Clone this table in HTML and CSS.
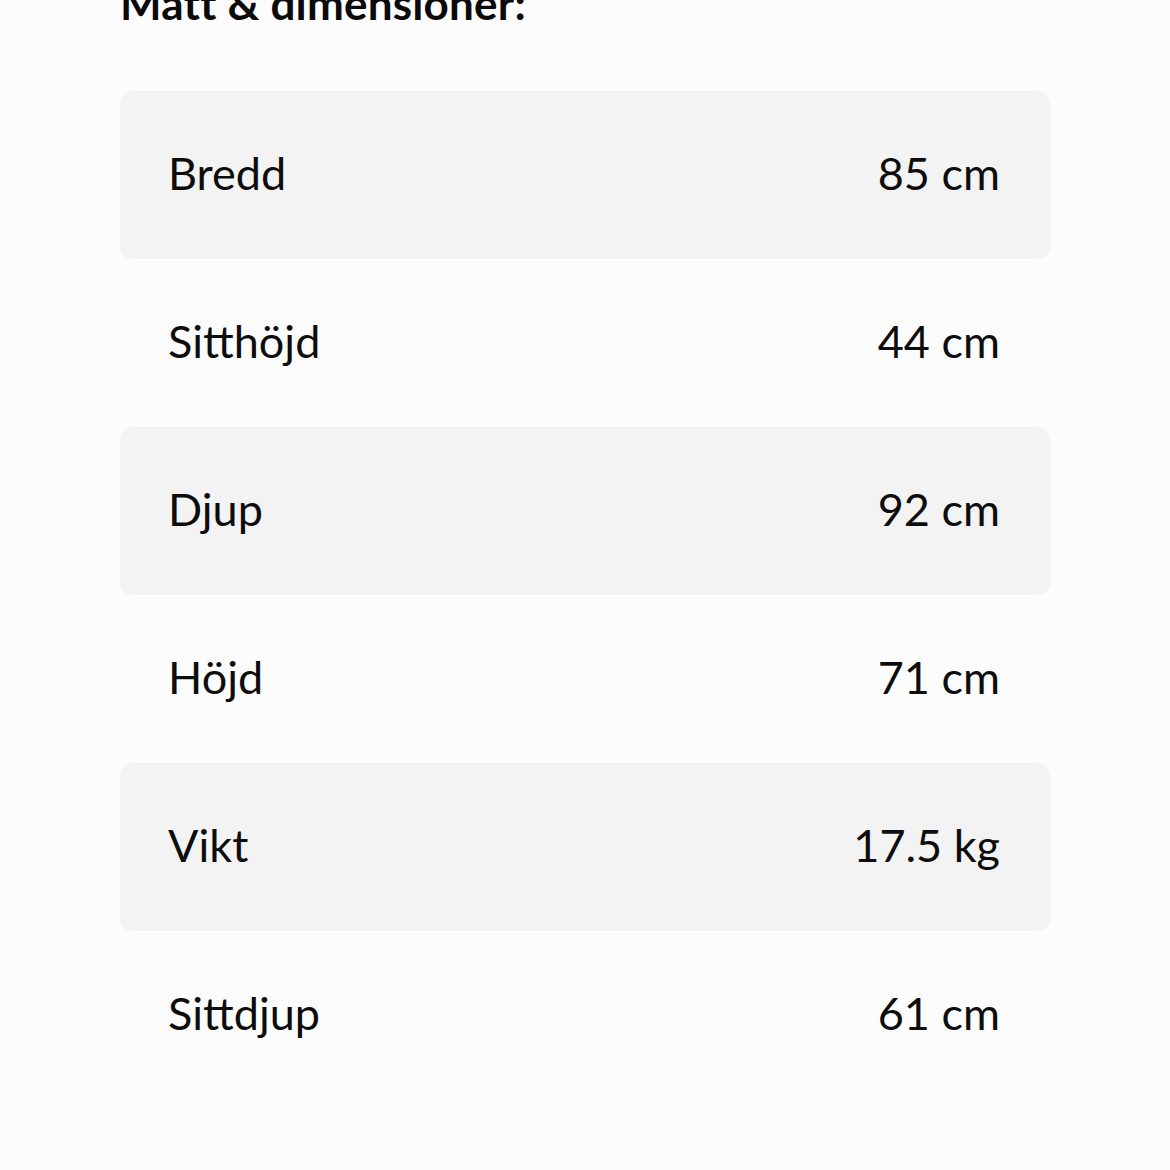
FILE: index.html
```html
<!DOCTYPE html>
<html lang="sv">
<head>
<meta charset="utf-8">
<title>Mått &amp; dimensioner</title>
<link rel="stylesheet" href="styles.css">
</head>
<body>
<section class="specs">
  <h2 class="specs-title">Mått &amp; dimensioner:</h2>
  <div class="spec-list">
    <div class="spec-row shaded"><span class="label">Bredd</span><span class="value">85 cm</span></div>
    <div class="spec-row"><span class="label">Sitthöjd</span><span class="value">44 cm</span></div>
    <div class="spec-row shaded"><span class="label">Djup</span><span class="value">92 cm</span></div>
    <div class="spec-row"><span class="label">Höjd</span><span class="value">71 cm</span></div>
    <div class="spec-row shaded"><span class="label">Vikt</span><span class="value">17.5 kg</span></div>
    <div class="spec-row"><span class="label">Sittdjup</span><span class="value">61 cm</span></div>
  </div>
</section>
</body>
</html>
```

FILE: styles.css
```css
html, body {
  margin: 0;
  padding: 0;
  background: #fcfcfc;
}
body {
  font-family: Lato, "Open Sans", "Liberation Sans", sans-serif;
  color: #0d0d0d;
  overflow: hidden;
  height: 1170px;
}
.specs {
  width: 930px;
  margin-left: 120px;
}
.specs-title {
  margin: -23px 0 0 0;
  font-size: 44px;
  line-height: 1.2;
  font-weight: 700;
  color: #0a0a0a;
  letter-spacing: 0.2px;
}
.spec-list {
  margin-top: 61px;
  display: flex;
  flex-direction: column;
}
.spec-row {
  height: 168px;
  display: flex;
  align-items: center;
  justify-content: space-between;
  padding: 0 50px 4px 48px;
  box-sizing: border-box;
  border-radius: 12px;
  font-size: 45px;
  line-height: normal;
}
.spec-row.shaded {
  background: #f3f3f3;
}
```
